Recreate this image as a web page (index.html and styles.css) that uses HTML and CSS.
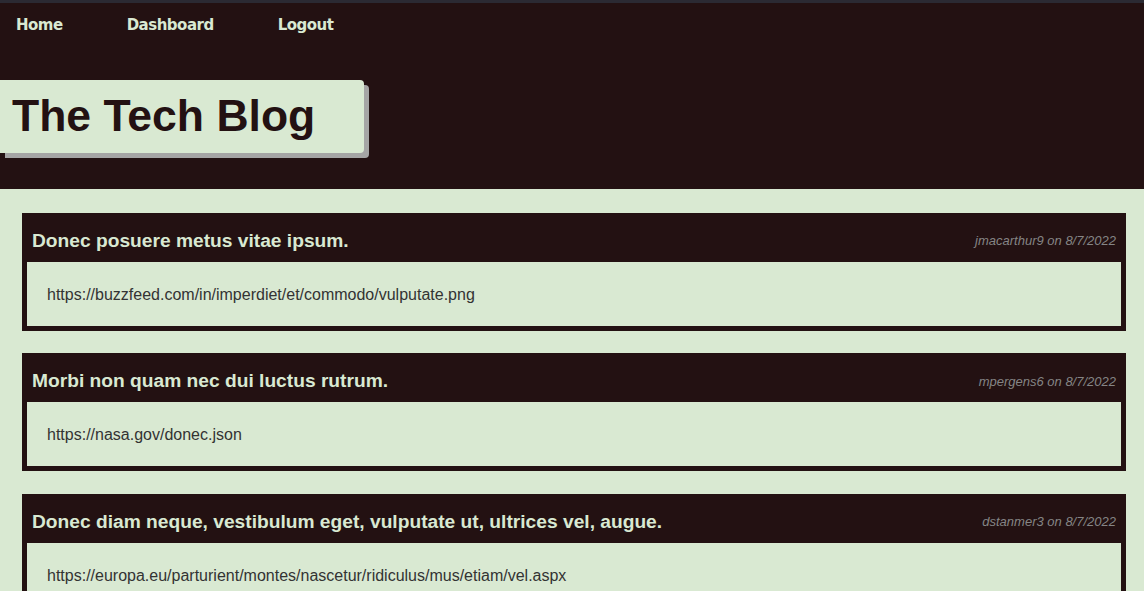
FILE: index.html
```html
<!DOCTYPE html>
<html>
<head>
<meta charset="utf-8">
<link rel="stylesheet" href="styles.css">
</head>
<body>
<div class="topstrip"></div>
<header class="site-header">
  <nav class="nav">
    <a href="#" class="nav-link">Home</a>
    <a href="#" class="nav-link">Dashboard</a>
    <a href="#" class="nav-link">Logout</a>
  </nav>
  <div class="title-box"><h1 class="title">The Tech Blog</h1></div>
</header>
<main class="posts">
  <article class="post">
    <div class="post-head"><h2 class="post-title">Donec posuere metus vitae ipsum.</h2><span class="post-meta">jmacarthur9 on 8/7/2022</span></div>
    <div class="post-body">https://buzzfeed.com/in/imperdiet/et/commodo/vulputate.png</div>
  </article>
  <article class="post">
    <div class="post-head"><h2 class="post-title">Morbi non quam nec dui luctus rutrum.</h2><span class="post-meta">mpergens6 on 8/7/2022</span></div>
    <div class="post-body">https://nasa.gov/donec.json</div>
  </article>
  <article class="post">
    <div class="post-head"><h2 class="post-title">Donec diam neque, vestibulum eget, vulputate ut, ultrices vel, augue.</h2><span class="post-meta">dstanmer3 on 8/7/2022</span></div>
    <div class="post-body">https://europa.eu/parturient/montes/nascetur/ridiculus/mus/etiam/vel.aspx</div>
  </article>
</main>
</body>
</html>
```
FILE: styles.css
```css
html, body { margin: 0; padding: 0; }
body {
  background: #d9e9d2;
  font-family: "Liberation Sans", Arial, sans-serif;
}
.topstrip { height: 3px; background: #2b2a33; }
.site-header {
  background: #231112;
  height: 186px;
  display: flex;
  flex-direction: column;
}
.nav {
  display: flex;
  padding: 13px 0 0 16px;
  height: 31px;
}
.nav-link {
  font-family: "DejaVu Sans", Verdana, sans-serif;
  font-weight: bold;
  font-size: 15px;
  color: #d9e9d2;
  text-decoration: none;
  line-height: 18px;
  margin-right: 64px;
  letter-spacing: -0.5px;
}
.title-box {
  margin-top: 33px;
  align-self: flex-start;
  background: #d9e9d2;
  width: 364px;
  height: 73px;
  border-radius: 0 4px 4px 0;
  box-shadow: 5px 5px 0 #a5a5a5;
  display: flex;
  align-items: center;
}
.title {
  margin: 0 0 0 12px;
  font-size: 44.5px;
  font-weight: bold;
  color: #231112;
  line-height: 1;
}
.posts {
  padding: 23.75px 18px 24px 22px;
  display: flex;
  flex-direction: column;
  gap: 22.5px;
}
.post {
  background: #231112;
  border: 5px solid #231112;
  border-top: 0;
}
.post-head {
  display: flex;
  justify-content: space-between;
  align-items: center;
  height: 42px;
  padding: 7px 5px 0;
}
.post-title {
  margin: 0;
  font-size: 19.2px;
  font-weight: bold;
  color: #d9e9d2;
}
.post-meta {
  font-size: 13px;
  font-style: italic;
  color: #858585;
}
.post-body {
  background: #d9e9d2;
  padding: 23px 20px 21px;
  font-size: 16px;
  line-height: 20px;
  color: #333;
}
```
